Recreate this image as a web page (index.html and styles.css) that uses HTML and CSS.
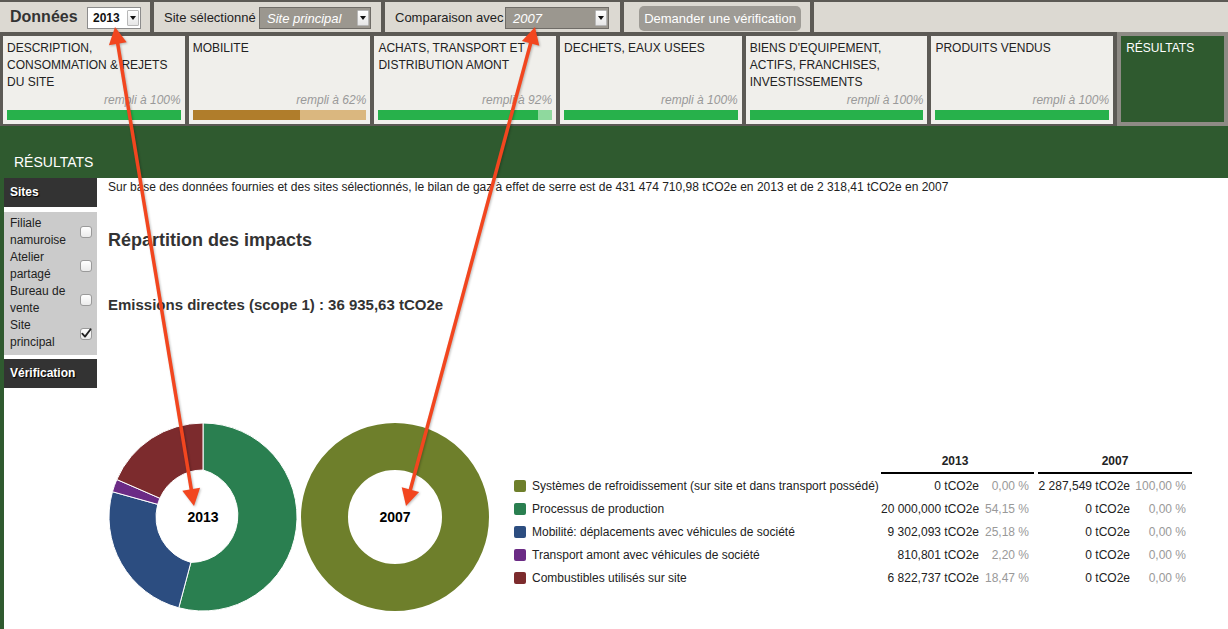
FILE: index.html
```html
<!DOCTYPE html>
<html lang="fr">
<head>
<meta charset="utf-8">
<title>Résultats</title>
<link rel="stylesheet" href="styles.css">
</head>
<body>
<div class="page">
  <header class="topbar">
    <div class="cell cell-data">
      <span class="data-label">Données</span>
      <div class="select select-light w-year"><span class="select-value">2013</span><span class="select-btn"></span></div>
    </div>
    <div class="cell cell-site">
      <span class="cell-label">Site sélectionné</span>
      <div class="select select-dark w-site"><span class="select-value">Site principal</span><span class="select-btn"></span></div>
    </div>
    <div class="cell cell-comp">
      <span class="cell-label">Comparaison avec</span>
      <div class="select select-dark w-comp"><span class="select-value">2007</span><span class="select-btn"></span></div>
    </div>
    <div class="cell cell-btn">
      <button class="verify-btn" type="button">Demander une vérification</button>
    </div>
    <div class="cell cell-fill"></div>
  </header>

  <nav class="tabs">
    <div class="tab">
      <div class="tab-title">DESCRIPTION,<br>CONSOMMATION &amp; REJETS<br>DU SITE</div>
      <div class="tab-progress">
        <div class="tab-pct">rempli à 100%</div>
        <div class="bar bar-green"><div class="bar-val" style="width:100%"></div></div>
      </div>
    </div>
    <div class="tab">
      <div class="tab-title">MOBILITE</div>
      <div class="tab-progress">
        <div class="tab-pct">rempli à 62%</div>
        <div class="bar bar-orange"><div class="bar-val" style="width:62%"></div></div>
      </div>
    </div>
    <div class="tab">
      <div class="tab-title">ACHATS, TRANSPORT ET<br>DISTRIBUTION AMONT</div>
      <div class="tab-progress">
        <div class="tab-pct">rempli à 92%</div>
        <div class="bar bar-green"><div class="bar-val" style="width:92%"></div></div>
      </div>
    </div>
    <div class="tab">
      <div class="tab-title">DECHETS, EAUX USEES</div>
      <div class="tab-progress">
        <div class="tab-pct">rempli à 100%</div>
        <div class="bar bar-green"><div class="bar-val" style="width:100%"></div></div>
      </div>
    </div>
    <div class="tab">
      <div class="tab-title">BIENS D'EQUIPEMENT,<br>ACTIFS, FRANCHISES,<br>INVESTISSEMENTS</div>
      <div class="tab-progress">
        <div class="tab-pct">rempli à 100%</div>
        <div class="bar bar-green"><div class="bar-val" style="width:100%"></div></div>
      </div>
    </div>
    <div class="tab">
      <div class="tab-title">PRODUITS VENDUS</div>
      <div class="tab-progress">
        <div class="tab-pct">rempli à 100%</div>
        <div class="bar bar-green"><div class="bar-val" style="width:100%"></div></div>
      </div>
    </div>
    <div class="tab-results">RÉSULTATS</div>
  </nav>

  <div class="band">RÉSULTATS</div>

  <main class="main">
    <aside class="sidebar">
      <div class="side-head">Sites</div>
      <div class="side-list">
        <div class="site-item"><span>Filiale<br>namuroise</span><span class="cb"></span></div>
        <div class="site-item"><span>Atelier<br>partagé</span><span class="cb"></span></div>
        <div class="site-item"><span>Bureau de<br>vente</span><span class="cb"></span></div>
        <div class="site-item"><span>Site<br>principal</span><span class="cb cb-checked"><svg viewBox="0 0 12 12" width="12" height="12"><path d="M2.3 5.6 L5 8.6 L10.6 1.2" fill="none" stroke="#222" stroke-width="1.8" stroke-linecap="round" stroke-linejoin="round"/></svg></span></div>
      </div>
      <div class="side-head">Vérification</div>
    </aside>

    <section class="content">
      <p class="intro">Sur base des données fournies et des sites sélectionnés, le bilan de gaz à effet de serre est de 431 474 710,98 tCO2e en 2013 et de 2 318,41 tCO2e en 2007</p>
      <h2 class="title">Répartition des impacts</h2>
      <h3 class="subtitle">Emissions directes (scope 1) : 36 935,63 tCO2e</h3>

      <div class="charts">
        <svg class="donut donut-first" viewBox="0 0 188 188" width="188" height="188">
          <path d="M94 0 A94 94 0 1 1 69.77 184.82 L81.88 139.41 A47 47 0 0 0 94 47 Z" fill="#2a7f50" stroke="#fff" stroke-width="1"/>
          <path d="M69.77 184.82 A94 94 0 0 1 3.46 68.73 L48.73 81.37 A47 47 0 0 0 81.88 139.41 Z" fill="#2c4d80" stroke="#fff" stroke-width="1"/>
          <path d="M3.46 68.73 A94 94 0 0 1 7.80 56.50 L50.90 75.25 A47 47 0 0 0 48.73 81.37 Z" fill="#6b2b85" stroke="#fff" stroke-width="1"/>
          <path d="M7.80 56.50 A94 94 0 0 1 94 0 L94 47 A47 47 0 0 0 50.90 75.25 Z" fill="#7c2b2d" stroke="#fff" stroke-width="1"/>
          <text x="94" y="99" class="donut-label">2013</text>
        </svg>
        <svg class="donut" viewBox="0 0 188 188" width="188" height="188">
          <circle cx="94" cy="94" r="70.5" fill="none" stroke="#6e7f2b" stroke-width="47"/>
          <text x="94" y="99" class="donut-label">2007</text>
        </svg>

        <div class="legend">
          <div class="lg-head-blank"></div>
          <div class="lg-head lg-c1">2013</div>
          <div class="lg-head lg-c2">2007</div>

          <span class="sw" style="background:#6e7f2b"></span><span class="lg-label">Systèmes de refroidissement (sur site et dans transport possédé)</span><span class="lg-val">0 tCO2e</span><span class="lg-pct">0,00 %</span><span></span><span class="lg-val">2 287,549 tCO2e</span><span class="lg-pct lg-pct2">100,00 %</span>

          <span class="sw" style="background:#2a7f50"></span><span class="lg-label">Processus de production</span><span class="lg-val">20 000,000 tCO2e</span><span class="lg-pct">54,15 %</span><span></span><span class="lg-val">0 tCO2e</span><span class="lg-pct lg-pct2">0,00 %</span>

          <span class="sw" style="background:#2c4d80"></span><span class="lg-label">Mobilité: déplacements avec véhicules de société</span><span class="lg-val">9 302,093 tCO2e</span><span class="lg-pct">25,18 %</span><span></span><span class="lg-val">0 tCO2e</span><span class="lg-pct lg-pct2">0,00 %</span>

          <span class="sw" style="background:#6b2b85"></span><span class="lg-label">Transport amont avec véhicules de société</span><span class="lg-val">810,801 tCO2e</span><span class="lg-pct">2,20 %</span><span></span><span class="lg-val">0 tCO2e</span><span class="lg-pct lg-pct2">0,00 %</span>

          <span class="sw" style="background:#7c2b2d"></span><span class="lg-label">Combustibles utilisés sur site</span><span class="lg-val">6 822,737 tCO2e</span><span class="lg-pct">18,47 %</span><span></span><span class="lg-val">0 tCO2e</span><span class="lg-pct lg-pct2">0,00 %</span>
        </div>
      </div>
    </section>
  </main>

  <svg class="arrows" viewBox="0 0 1228 629" width="1228" height="629">
    <g fill="#f2461f" stroke="none">
      <line x1="116.6" y1="36.9" x2="192.4" y2="496.1" stroke="#f2461f" stroke-width="3.5"/>
      <polygon points="115,27 108.9,45.2 126.7,42.3"/>
      <polygon points="194,506 182.3,490.7 200.1,487.7"/>
      <line x1="532.4" y1="36.7" x2="408.6" y2="496.3" stroke="#f2461f" stroke-width="3.5"/>
      <polygon points="535,27 539.3,45.7 521.9,41.1"/>
      <polygon points="406,506 419.1,491.9 401.7,487.3"/>
    </g>
  </svg>
</div>
</body>
</html>
```

FILE: styles.css
```css
html, body {
  margin: 0;
  padding: 0;
  background: #fff;
}
body {
  font-family: "Liberation Sans", Arial, Helvetica, sans-serif;
  color: #222;
}
.page {
  position: relative;
  width: 1228px;
  min-height: 629px;
  display: flex;
  flex-direction: column;
  overflow: hidden;
}

/* ---------- top bar ---------- */
.topbar {
  display: flex;
  gap: 4px;
  background: #5c5a55;
  padding-top: 2px;
}
.cell {
  height: 30px;
  box-sizing: border-box;
  background: #dcd9d2;
  display: flex;
  align-items: center;
  justify-content: space-between;
  padding: 0 10px;
}
.cell-data { width: 150px; padding-right: 9px; }
.cell-site { width: 227px; }
.cell-comp { width: 235px; padding-right: 11px; }
.cell-btn { width: 186px; padding: 0 9px 0 15px; }
.cell-fill { flex: 1; }
.data-label {
  font-size: 16px;
  font-weight: bold;
  color: #333;
}
.cell-label {
  font-size: 13px;
  color: #222;
}
.select {
  height: 22px;
  box-sizing: border-box;
  margin-top: 2px;
  display: flex;
  align-items: center;
  padding-right: 1px;
}
.select-value { flex: 1; }
.select-light {
  background: #fff;
  border: 1px solid #8c8c8c;
  padding-left: 5px;
  font-size: 12px;
  font-weight: bold;
  color: #111;
}
.select-dark {
  background: #9b978f;
  border: 1px solid #6f6c67;
  padding-left: 7px;
  color: #fff;
  font-size: 13px;
  font-style: italic;
}
.w-year { width: 54px; }
.w-site { width: 112px; }
.w-comp { width: 104px; }
.select-btn {
  width: 12px;
  height: 16px;
  box-sizing: border-box;
  background: linear-gradient(#ffffff, #e6e6e6);
  border: 1px solid #b8b8b8;
  border-radius: 1px;
  display: flex;
  align-items: center;
  justify-content: center;
}
.select-btn::after {
  content: "";
  border-left: 3px solid transparent;
  border-right: 3px solid transparent;
  border-top: 4px solid #111;
}
.verify-btn {
  width: 162px;
  height: 25px;
  margin-top: 3px;
  padding: 0;
  border: none;
  border-radius: 5px;
  background: #9e9b95;
  color: #fff;
  font-family: "Liberation Sans", Arial, sans-serif;
  font-size: 13px;
}

/* ---------- tabs ---------- */
.tabs {
  display: flex;
  gap: 4px;
  background: #5c5a55;
  padding: 4px 0 2px 3px;
}
.tab {
  width: 181.7px;
  height: 88px;
  flex-shrink: 0;
  box-sizing: border-box;
  background: #f0efeb;
  padding: 4px;
  display: flex;
  flex-direction: column;
  justify-content: space-between;
}
.tab-title {
  font-size: 12px;
  line-height: 17px;
  color: #222;
}
.tab-pct {
  font-size: 12px;
  line-height: 14px;
  font-style: italic;
  color: #999;
  text-align: right;
  margin-bottom: 3px;
}
.bar {
  height: 10px;
  display: flex;
}
.bar-val { height: 100%; }
.bar-green { background: #8fd99e; }
.bar-green .bar-val { background: #27b14b; }
.bar-orange { background: #dab77f; }
.bar-orange .bar-val { background: #b07d2b; }
.tab-results {
  flex: 1;
  margin: -4px 0 -2px 0;
  border: 4px solid #8e8b85;
  background: #2f5a2f;
  color: #fff;
  font-size: 12px;
  line-height: 17px;
  padding: 4px 5px;
}

/* ---------- green band ---------- */
.band {
  height: 52px;
  box-sizing: border-box;
  background: #2f5a2f;
  color: #fff;
  font-size: 14px;
  line-height: 16px;
  padding: 28px 0 0 14px;
}

/* ---------- main ---------- */
.main {
  flex: 1;
  display: flex;
  border-left: 4px solid #2f5a2f;
}
.sidebar {
  width: 93px;
  flex-shrink: 0;
}
.side-head {
  height: 29px;
  background: #333;
  color: #fff;
  font-size: 12px;
  font-weight: bold;
  line-height: 29px;
  padding-left: 6px;
  text-shadow: 1px 1px 1px #000;
}
.side-list {
  background: #cbcbcb;
  margin: 5px 0 4px;
  padding: 3px 5px 4px 6px;
}
.site-item {
  display: flex;
  align-items: center;
  justify-content: space-between;
  font-size: 12px;
  line-height: 17px;
  color: #222;
}
.cb {
  width: 12px;
  height: 12px;
  box-sizing: border-box;
  border: 1px solid #9a9a9a;
  border-radius: 3px;
  background: linear-gradient(#ffffff, #ebebeb);
  position: relative;
}
.cb svg {
  display: block;
  margin: -1px 0 0 -1px;
}

.content {
  flex: 1;
  padding-left: 11px;
}
.intro {
  margin: 0;
  padding-top: 1px;
  font-size: 12px;
  line-height: 16px;
  color: #222;
  white-space: nowrap;
}
.title {
  margin: 34px 0 0;
  font-size: 18px;
  line-height: 22px;
  font-weight: bold;
  color: #333;
}
.subtitle {
  margin: 45px 0 0;
  font-size: 15px;
  line-height: 18px;
  font-weight: bold;
  color: #333;
}
.charts {
  display: flex;
  align-items: flex-start;
  margin-top: 109px;
}
.donut {
  display: block;
  flex-shrink: 0;
  margin-left: 4px;
}
.donut-first { margin-left: 1px; }
.donut-label {
  font-family: "Liberation Sans", Arial, sans-serif;
  font-size: 14px;
  font-weight: bold;
  fill: #000;
  text-anchor: middle;
}

/* ---------- legend table ---------- */
.legend {
  margin: 30px 0 0 24px;
  display: grid;
  grid-template-columns: 19px 349px 98px 55px 4px 92px 62px;
  grid-template-rows: 21px repeat(5, 23px);
  font-size: 12px;
  color: #222;
  align-items: center;
  white-space: nowrap;
}
.lg-head-blank { grid-column: 1 / span 2; }
.lg-head {
  align-self: stretch;
  font-weight: bold;
  text-align: center;
  line-height: 16px;
  border-bottom: 2px solid #000;
  color: #222;
}
.lg-c1 { grid-column: 3 / span 2; padding-right: 5px; }
.lg-c2 { grid-column: 6 / span 2; }
.sw {
  width: 12px;
  height: 12px;
  margin-left: 1px;
  border-radius: 2px;
}
.lg-val { text-align: right; }
.lg-pct {
  text-align: right;
  color: #999;
  padding-right: 5px;
}
.lg-pct2 { padding-right: 6px; }

/* ---------- annotation arrows ---------- */
.arrows {
  position: absolute;
  left: 0;
  top: 0;
  pointer-events: none;
  filter: drop-shadow(1px 1px 1px rgba(0, 0, 0, 0.25));
}
```
